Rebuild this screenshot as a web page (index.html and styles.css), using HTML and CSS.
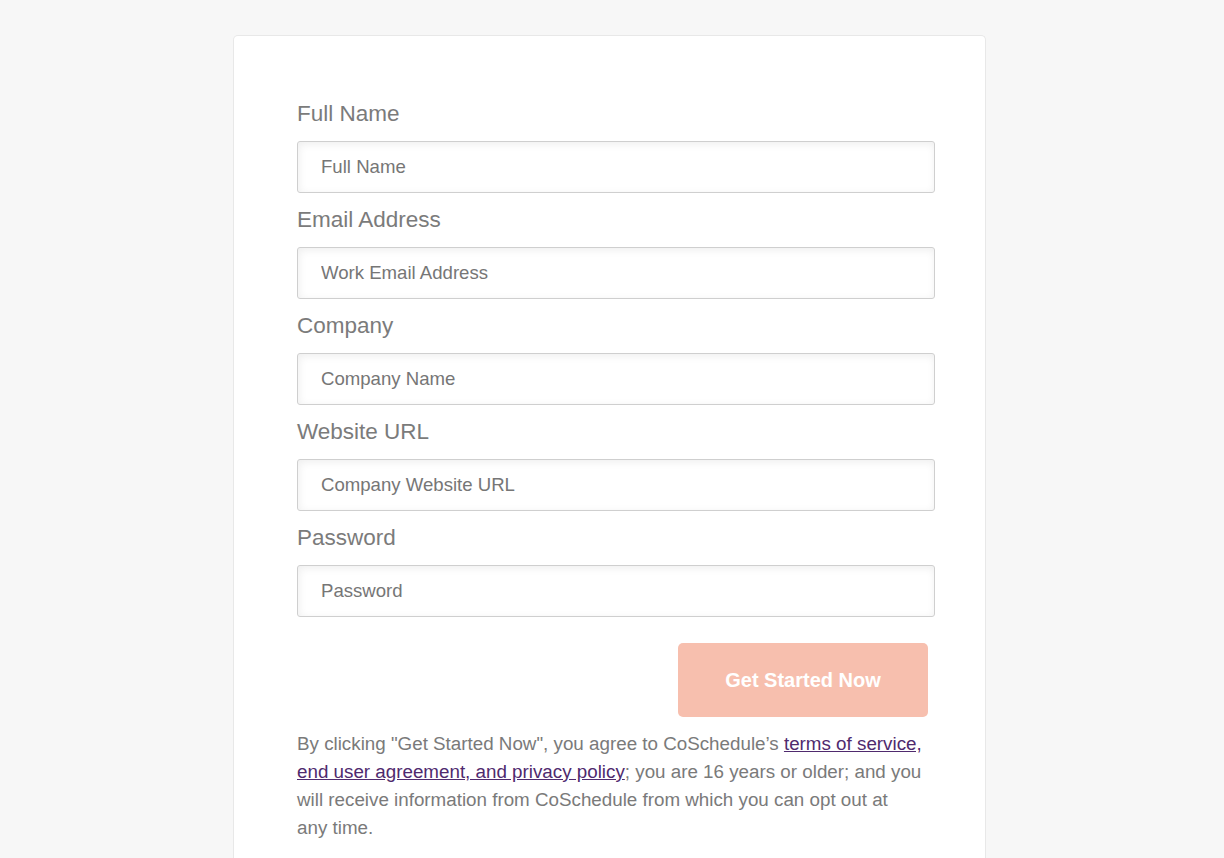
FILE: index.html
```html
<!DOCTYPE html>
<html lang="en">
<head>
<meta charset="utf-8">
<title>Sign up</title>
<link rel="stylesheet" href="styles.css">
</head>
<body>
<div class="page">
  <form class="card">
    <div class="field">
      <label class="label" for="name">Full Name</label>
      <input class="input" id="name" type="text" placeholder="Full Name">
    </div>
    <div class="field">
      <label class="label" for="email">Email Address</label>
      <input class="input" id="email" type="email" placeholder="Work Email Address">
    </div>
    <div class="field">
      <label class="label" for="company">Company</label>
      <input class="input" id="company" type="text" placeholder="Company Name">
    </div>
    <div class="field">
      <label class="label" for="url">Website URL</label>
      <input class="input" id="url" type="text" placeholder="Company Website URL">
    </div>
    <div class="field">
      <label class="label" for="pw">Password</label>
      <input class="input" id="pw" type="password" placeholder="Password">
    </div>
    <div class="actions">
      <button class="btn" type="button">Get Started Now</button>
    </div>
    <p class="legal">By clicking "Get Started Now", you agree to CoSchedule’s <a href="#">terms of service, end user agreement, and privacy policy</a>; you are 16 years or older; and you will receive information from CoSchedule from which you can opt out at any time.</p>
  </form>
</div>
</body>
</html>
```
FILE: styles.css
```css
html, body {
  margin: 0;
  padding: 0;
  background: #f7f7f7;
  font-family: "Liberation Sans", Arial, sans-serif;
}
.page {
  padding-top: 35px;
  padding-left: 233px;
}
.card {
  width: 638px;
  background: #fff;
  border: 1px solid #e8e8e8;
  border-bottom: none;
  border-radius: 5px 5px 0 0;
  padding: 63px 50px 40px 63px;
  min-height: 780px;
}
.field {
  display: flex;
  flex-direction: column;
  margin-bottom: 12px;
}
.label {
  font-size: 22.5px;
  line-height: 30px;
  color: #7b7b7b;
  margin-bottom: 12px;
}
.input {
  box-sizing: border-box;
  width: 638px;
  height: 52px;
  border: 1px solid #cfcfcf;
  border-radius: 3px;
  padding: 0 23px;
  font-family: "Liberation Sans", Arial, sans-serif;
  font-size: 18.6px;
  color: #555;
  background: #fff;
  box-shadow: inset 1px 2px 8px rgba(0,0,0,0.07);
  outline: none;
}
.input::placeholder {
  color: #767676;
  opacity: 1;
}
.actions {
  display: flex;
  justify-content: flex-end;
  width: 631px;
  margin-top: 26px;
}
.btn {
  width: 250px;
  height: 74px;
  border: none;
  border-radius: 5px;
  background: #f7bfae;
  color: #fff;
  font-family: "Liberation Sans", Arial, sans-serif;
  font-weight: bold;
  font-size: 20px;
}
.legal {
  width: 625px;
  margin: 13px 0 0;
  font-size: 18.8px;
  line-height: 28px;
  color: #7a7a7a;
}
.legal a {
  color: #4f2a6e;
  text-decoration: underline;
}
```
